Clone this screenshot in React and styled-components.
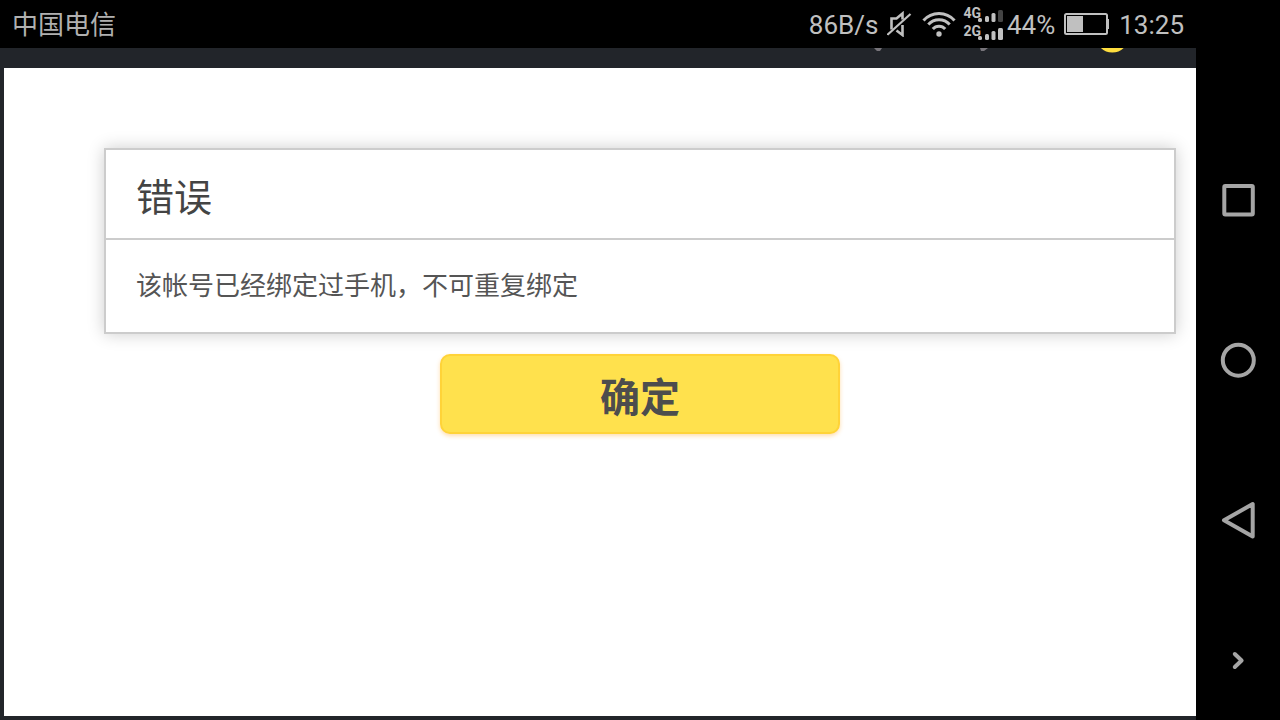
import { useState } from "react";
import styled, { createGlobalStyle } from "styled-components";

const signals = [
  { label: "4G", level: 3 },
  { label: "2G", level: 4 },
];

const bars = [
  { x: 0, width: 4, height: 4 },
  { x: 7, width: 4, height: 6 },
  { x: 13.5, width: 4, height: 9 },
  { x: 20, width: 5, height: 12 },
];

const MutedIcon = () => (
  <svg width="26" height="26" viewBox="0 0 26 26" fill="none" aria-label="静音">
    <path
      d="M4.500 18.500V7.500h5L15.500 2.500v6M9.500 19.500l6 4.500V14"
      stroke="#c0c0c0"
      strokeWidth="2.600"
    />
    <path d="M0.500 23.800L23.500 3" stroke="#c0c0c0" strokeWidth="2.200" />
  </svg>
);

const WifiIcon = () => (
  <svg width="34" height="26" viewBox="0 0 34 26" fill="none" aria-label="Wi-Fi">
    <path
      d="M1.500 9.600a20.600 20.600 0 0 1 31 0M6.300 13.500a14.300 14.300 0 0 1 21.400 0M10.800 18a8.200 8.200 0 0 1 12.400 0"
      stroke="#c0c0c0"
      strokeWidth="3"
    />
    <circle cx="17" cy="23" r="2.700" fill="#c0c0c0" />
  </svg>
);

const BatteryIcon = () => (
  <svg width="46" height="22" viewBox="0 0 46 22" fill="none" aria-label="电池">
    <rect x="1" y="1" width="42" height="20" rx="1.500" stroke="#c0c0c0" strokeWidth="2" />
    <rect x="3" y="3" width="16" height="16" fill="#c0c0c0" />
    <path d="M43 6h2v10h-2z" fill="#c0c0c0" />
  </svg>
);

const SignalBars = ({ level }) => (
  <svg width="25" height="12" viewBox="0 0 25 12" aria-hidden="true">
    {bars.map(({ x, width, height }, i) => (
      <rect
        key={x}
        x={x}
        y={12 - height}
        width={width}
        height={height}
        rx="1.500"
        fill={i < level ? "#c0c0c0" : "#444"}
      />
    ))}
  </svg>
);

const App = () => {
  const [open, setOpen] = useState(true);

  return (
    <Screen>
      <GlobalStyle />

      <Main>
        <StatusBar>
          <Carrier>中国电信</Carrier>
          <StatusGroup>
            <StatusText>86B/s</StatusText>
            <MutedIcon />
            <WifiIcon />
            <Signals>
              {signals.map(({ label, level }) => (
                <Signal key={label}>
                  <SignalLabel>{label}</SignalLabel>
                  <SignalBars level={level} />
                </Signal>
              ))}
            </Signals>
            <Percent>44%</Percent>
            <BatteryIcon />
            <StatusText>13:25</StatusText>
          </StatusGroup>
        </StatusBar>

        <Toolbar>
          <svg width="260" height="6" viewBox="0 0 260 6" aria-hidden="true">
            <path d="M0 0h8l-2 3h-3zM106 0h8l-4 3h-3z" fill="#77747a" />
            <circle cx="238.300" cy="-11.800" r="16.400" fill="#ffde3f" />
          </svg>
        </Toolbar>

        <Page>
          {open && (
            <>
              <Card>
                <Title>错误</Title>
                <Message>该帐号已经绑定过手机，不可重复绑定</Message>
              </Card>
              <BtnConfirm type="button" onClick={() => setOpen(false)}>
                确定
              </BtnConfirm>
            </>
          )}
        </Page>
      </Main>

      <Navigation>
        <NavButton type="button" aria-label="最近任务">
          <svg width="36" height="36" viewBox="0 0 36 36">
            <rect x="4.300" y="4" width="28.500" height="28.500" rx="1" />
          </svg>
        </NavButton>
        <NavButton type="button" aria-label="主屏幕">
          <svg width="36" height="36" viewBox="0 0 36 36">
            <circle cx="18.300" cy="18.200" r="15.500" />
          </svg>
        </NavButton>
        <NavButton type="button" aria-label="返回">
          <svg width="36" height="40" viewBox="0 0 36 40">
            <path d="M4 20.300L32.700 4v32.500z" />
          </svg>
        </NavButton>
        <NavButton type="button" aria-label="隐藏导航栏">
          <svg width="20" height="20" viewBox="0 0 20 20">
            <path d="M6.800 4l6.800 6.500L6.800 17" strokeLinecap="round" />
          </svg>
        </NavButton>
      </Navigation>
    </Screen>
  );
};

const GlobalStyle = createGlobalStyle`
  * {
    box-sizing: border-box;
  }

  body {
    background-color: #000;
    font-family: Roboto, "Noto Sans CJK SC", sans-serif;
    margin: 0;
  }

  svg {
    display: block;
    flex-shrink: 0;
  }
`;

const Screen = styled.div`
  display: grid;
  grid-template-columns: 1fr 84px;
  min-height: 100vh;
`;

const Main = styled.div`
  background-color: #22252a;
  display: flex;
  flex-direction: column;
`;

const StatusBar = styled.header`
  align-items: center;
  background-color: #000;
  color: #c0c0c0;
  display: flex;
  font-size: 26px;
  height: 48px;
  justify-content: space-between;
  line-height: 46px;
  padding: 0 12px;
`;

const Carrier = styled.span`
  color: #b0b0b0;
  font-family: "Noto Sans CJK SC", sans-serif;
  padding-bottom: 2px;
`;

const StatusGroup = styled.div`
  align-items: center;
  display: flex;
  gap: 9px;
`;

const StatusText = styled.span`
  padding-top: 2px;
`;

const Percent = styled(StatusText)`
  margin-left: -5px;
`;

const Signals = styled.div`
  display: flex;
  flex-direction: column;
  gap: 4px;
  margin-left: -2px;
`;

const Signal = styled.div`
  align-items: flex-end;
  display: flex;
  height: 14px;
`;

const SignalLabel = styled.span`
  align-self: flex-start;
  font-size: 14px;
  font-weight: 700;
  line-height: 10px;
  margin-right: -3px;
`;

const Toolbar = styled.div`
  display: flex;
  height: 20px;
  justify-content: flex-end;
  padding-right: 62px;
`;

const Page = styled.main`
  align-items: center;
  background-color: #fff;
  display: flex;
  flex: 1;
  flex-direction: column;
  gap: 20px;
  margin: 0 0 4px 4px;
  padding: 80px 20px 20px 100px;
`;

const Card = styled.section`
  align-self: stretch;
  border: 2px solid #ccc;
  box-shadow: 0 0 16px rgba(0, 0, 0, 0.2);
`;

const Title = styled.h1`
  border-bottom: 2px solid #ccc;
  color: #444;
  font-size: 38px;
  font-weight: 400;
  line-height: 80px;
  margin: 0;
  padding: 8px 30px 0;
`;

const Message = styled.p`
  color: #555;
  font-size: 26px;
  font-weight: 400;
  line-height: 32px;
  margin: 0;
  padding: 30px;
`;

const BtnConfirm = styled.button`
  background-color: #ffe14d;
  border: 2px solid #ffd338;
  border-radius: 10px;
  box-shadow: 0 2px 4px rgba(255, 170, 50, 0.4);
  color: #4d4d4d;
  cursor: pointer;
  font-family: inherit;
  font-size: 40px;
  font-weight: 700;
  line-height: 66px;
  max-width: 100%;
  padding: 10px 0 0;
  width: 400px;

  &:active {
    background-color: #ffd338;
  }
`;

const Navigation = styled.nav`
  background-color: #000;
  display: grid;
  grid-template-rows: 4fr 4fr 4fr 3fr;
  padding-top: 120px;
`;

const NavButton = styled.button`
  align-items: center;
  background-color: transparent;
  border: none;
  cursor: pointer;
  display: flex;
  justify-content: center;
  padding: 0;

  svg {
    fill: none;
    stroke: #a5a5a5;
    stroke-linejoin: round;
    stroke-width: 4px;
  }
`;

export default App;
